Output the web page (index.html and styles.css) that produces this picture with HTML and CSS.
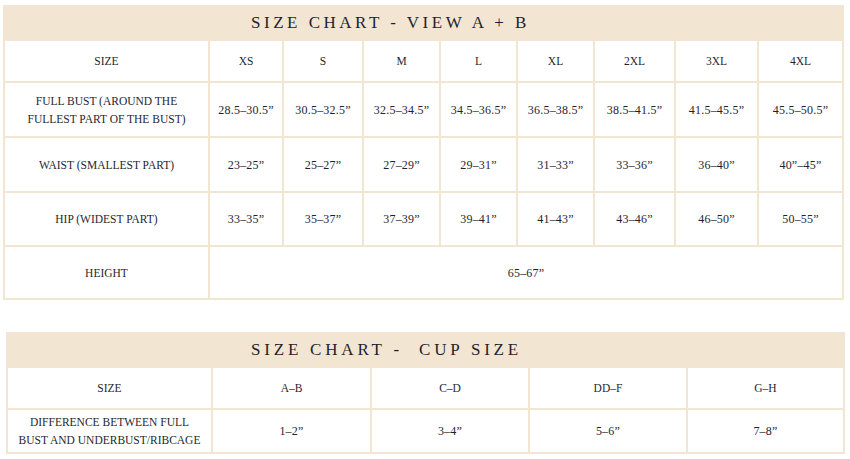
FILE: index.html
```html
<!DOCTYPE html>
<html>
<head>
<meta charset="utf-8">
<link rel="stylesheet" href="styles.css">
</head>
<body>
<table class="chart chart-main">
  <colgroup>
    <col class="c-label">
    <col style="width:74px"><col style="width:80px"><col style="width:77px"><col style="width:77px">
    <col style="width:77px"><col style="width:81px"><col style="width:83px"><col style="width:85px">
  </colgroup>
  <tr class="title-row"><th colspan="9" class="title">SIZE CHART - VIEW A + B</th></tr>
  <tr class="r-head"><td>SIZE</td><td>XS</td><td>S</td><td>M</td><td>L</td><td>XL</td><td>2XL</td><td>3XL</td><td>4XL</td></tr>
  <tr class="r-55"><td class="label">FULL BUST (AROUND THE<br>FULLEST PART OF THE BUST)</td><td class="num">28.5–30.5”</td><td class="num">30.5–32.5”</td><td class="num">32.5–34.5”</td><td class="num">34.5–36.5”</td><td class="num">36.5–38.5”</td><td class="num">38.5–41.5”</td><td class="num">41.5–45.5”</td><td class="num">45.5–50.5”</td></tr>
  <tr class="r-55"><td>WAIST (SMALLEST PART)</td><td class="num">23–25”</td><td class="num">25–27”</td><td class="num">27–29”</td><td class="num">29–31”</td><td class="num">31–33”</td><td class="num">33–36”</td><td class="num">36–40”</td><td class="num">40”–45”</td></tr>
  <tr class="r-54"><td>HIP (WIDEST PART)</td><td class="num">33–35”</td><td class="num">35–37”</td><td class="num">37–39”</td><td class="num">39–41”</td><td class="num">41–43”</td><td class="num">43–46”</td><td class="num">46–50”</td><td class="num">50–55”</td></tr>
  <tr class="r-53"><td>HEIGHT</td><td colspan="8" class="num">65–67”</td></tr>
</table>

<table class="chart chart-cup">
  <colgroup>
    <col style="width:205px"><col style="width:159px"><col style="width:158px"><col style="width:158px"><col style="width:157px">
  </colgroup>
  <tr class="title-row"><th colspan="5" class="title">SIZE CHART -&nbsp; CUP SIZE</th></tr>
  <tr class="r-42"><td>SIZE</td><td>A–B</td><td>C–D</td><td>DD–F</td><td>G–H</td></tr>
  <tr class="r-44"><td class="label">DIFFERENCE BETWEEN FULL<br>BUST AND UNDERBUST/RIBCAGE</td><td class="num">1–2”</td><td class="num">3–4”</td><td class="num">5–6”</td><td class="num">7–8”</td></tr>
</table>
</body>
</html>
```

FILE: styles.css
```css
html, body {
  margin: 0;
  padding: 0;
  background: #ffffff;
}

body {
  font-family: "Liberation Serif", "Times New Roman", serif;
  color: #1f1f30;
}

.chart {
  border-collapse: collapse;
  table-layout: fixed;
}

.chart-main {
  width: 841px;
  margin: 5px 0 0 3px;
}

.chart-cup {
  width: 838px;
  margin: 32px 0 0 6px;
}

.c-label {
  width: 205px;
}

.chart td,
.chart th {
  font-family: "Liberation Serif", "Times New Roman", serif;
  border: 2px solid #f2e5d1;
  text-align: center;
  vertical-align: middle;
  padding: 0;
  font-size: 11.5px;
  font-weight: normal;
  line-height: 18px;
}

.chart td.num {
  font-size: 12px;
  letter-spacing: 0.2px;
}

.chart th.title {
  background: #f2e5d1;
  font-size: 17px;
  letter-spacing: 3.5px;
  height: 32px;
  padding: 0 66px 0 0;
  line-height: 32px;
  font-weight: normal;
}

.chart-cup th.title {
  height: 32px;
  line-height: 32px;
  letter-spacing: 3.8px;
  padding-right: 78px;
}

.r-head td { height: 40px; }
.r-55 td { height: 53px; }
.r-54 td { height: 52px; }
.r-53 td { height: 51px; }
.r-42 td { height: 40px; }
.r-44 td { height: 42px; }
```
